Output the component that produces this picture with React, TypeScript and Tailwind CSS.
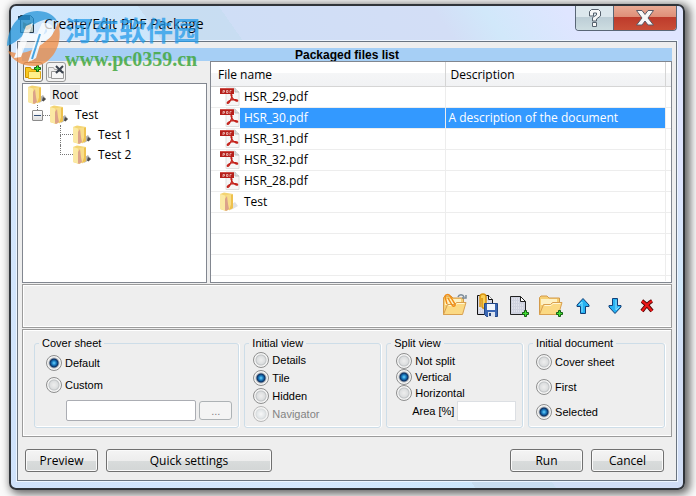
import React from "react";

const ui = "font-['Open_Sans','Noto_Sans',sans-serif]";

function PdfIcon() {
  return (
    <svg width="20" height="20" viewBox="0 0 20 20" aria-hidden="true" className="block shrink-0">
      <path d="M6 1h9l4 4v13.500H6z" fill="#f6f6f6" stroke="#dedede" />
      <path d="M15 1v4h4" fill="#ddd" stroke="#bbb" />
      <path d="M0 1h14v6H0z" fill="#b51f1a" />
      <path d="M0 1h14v1H0z" fill="#d0504a" />
      <path d="M3 6V3.500h1.500V5H3M6.500 3.500v2H8v-2zM10 6V3.500h1.500" fill="none" stroke="#f0c4c0" strokeWidth=".8" />
      <path d="M11 7.500c1.500 0 1 2.500 0 4.500-.8 2-2.200 4.500-3.300 4.300-1.500-.4 1-2.800 4-3.400 2.800-.6 6-.4 6 .8 0 1-3 .2-4.700-2C11.500 9.500 10.500 8.500 11 7.500z" fill="none" stroke="#c4221b" strokeWidth="1.300" />
    </svg>
  );
}

function FolderIcon({ badge = true }: { badge?: boolean }) {
  return (
    <svg width="20" height="20" viewBox="0 0 20 20" aria-hidden="true" className="block shrink-0">
      <path d="M11 18l7-4-3-4-3 2z" fill={badge ? "#b4b4b4" : "#e2e2e2"} />
      {badge && <path d="M15 12l3 2-2.500 2.500-1.500-1z" fill="#4a4a4a" />}
      <path d="M0 2L4 .5l9 1.500v14L6 19l-6-2z" fill="#f3d472" />
      <path d="M0 2l5 1.500v15L0 17z" fill="#fbe9a4" />
      <path d="M5 3.500L12 2v13l-4 3z" fill="#f8dd8a" />
      <path d="M5 18V7l2-3 1 8 1 5-3 2z" fill="#dca28a" />
      <path d="M11 2.500l2 .5v13l-4 2.500 2-6z" fill="#eec14e" />
    </svg>
  );
}

function Plus({ x, y }: { x: number; y: number }) {
  return (
    <g transform={`translate(${x} ${y})`}>
      <path d="M2.500.5h2v2h2v2h-2v2h-2v-2h-2v-2h2z" fill="#3fe02f" stroke="#145f14" />
    </g>
  );
}

function OpenFolderShape() {
  return (
    <>
      <path d="M1.500 21.500V4.500L3 3h6l2 2h10.500v4l-2 12z" fill="#f6cf73" stroke="#d39a4a" />
      <path d="M3 6h16v6H3z" fill="#fdf1c4" />
      <path d="M1.500 21.500l4-10h7l2-2h9.500l-3.500 12z" fill="#fbd983" stroke="#d9a050" />
      <path d="M6.500 12.500h6.500l2-2h7.500" fill="none" stroke="#fff6d4" />
    </>
  );
}

function OpenIcon() {
  return (
    <svg width="26" height="26" viewBox="0 0 26 26" aria-hidden="true">
      <OpenFolderShape />
      <path d="M5 11L3 4c0-3 4-3 5-1l5 8c1 2-2 3-3 1L6 5" fill="none" stroke="#f18d16" strokeWidth="1.500" />
      <path d="M16 4c1-3 5-3 6 0m2-2v3h-4" fill="none" stroke="#7b8b98" strokeWidth="1.500" />
    </svg>
  );
}

function SaveIcon() {
  return (
    <svg width="24" height="26" viewBox="0 0 24 26" aria-hidden="true">
      <path d="M2.500 2.500h11l4 4v15h-15z" fill="#d5d7e4" stroke="#111" />
      <path d="M4 6h12M4 9h12M4 12h12M4 15h12M4 18h12" stroke="#f6f6fa" strokeDasharray="1 1" />
      <path d="M13.500 2.500v4h4" fill="#fff" stroke="#111" />
      <path d="M5 14V4c0-4 6-4 6 0v9c0 3-4 3-4 0V5" fill="#f9cf55" stroke="#d99411" strokeWidth="1.500" />
      <path d="M9.500 10.500h13v13h-11l-2-2z" fill="#3a67b4" stroke="#234684" />
      <path d="M12 11h8v6h-8z" fill="#f2f6fc" />
      <path d="M13 19h7v5h-7z" fill="#dde4ee" />
      <path d="M14 20h2v3h-2z" fill="#27467e" />
    </svg>
  );
}

function NewPageIcon() {
  return (
    <svg width="24" height="26" viewBox="0 0 24 26" aria-hidden="true">
      <path d="M3.500 3.500h10l5 5v13h-15z" fill="#cfd2df" stroke="#222" />
      <path d="M13.500 3.500v5h5z" fill="#fff" stroke="#222" />
      <path d="M5 6h7M5 9h7M5 12h12M5 15h12M5 18h12" stroke="#f1f1f6" strokeDasharray="1 1" />
      <Plus x={15} y={17} />
    </svg>
  );
}

function NewFolderIcon() {
  return (
    <svg width="26" height="26" viewBox="0 0 26 26" aria-hidden="true">
      <OpenFolderShape />
      <Plus x={18} y={17} />
    </svg>
  );
}

function ArrowIcon({ down = false }: { down?: boolean }) {
  return (
    <svg width="16" height="18" viewBox="0 0 16 18" aria-hidden="true" className={down ? "rotate-180" : ""}>
      <path d="M8 1.500L14 8v1.500h-3.500v7h-5v-7H2V8z" fill="#27b2f2" stroke="#123f78" />
      <path d="M7 5v10M4 8l3-3" stroke="#8ee2ff" fill="none" />
    </svg>
  );
}

function DeleteIcon() {
  return (
    <svg width="14" height="14" viewBox="0 0 14 14" aria-hidden="true">
      <path d="M2 2c3 2 7 6 10 10M12 2C8 4 5 8 2 12" stroke="#4d0505" strokeWidth="4" fill="none" />
      <path d="M2 2c3 2 7 6 10 10M12 2C8 4 5 8 2 12" stroke="#ea1717" strokeWidth="2.200" fill="none" />
    </svg>
  );
}

function SmallFolder({ remove = false }: { remove?: boolean }) {
  return (
    <svg width="18" height="18" viewBox="0 0 18 18" aria-hidden="true">
      <path d="M1.500 14.500v-10h5l1 2h7v8z" fill={remove ? "#eee" : "#f8c81e"} stroke={remove ? "#aaa" : "#c78d00"} />
      <path d="M4.500 15.500v-7h12v7z" fill={remove ? "#f6f6f6" : "#fff08a"} stroke={remove ? "#999" : "#dfa712"} />
      {remove ? (
        <path d="M9 3l7 7M16 3l-7 7" stroke="#3a424e" strokeWidth="2" />
      ) : (
        <Plus x={10} y={2} />
      )}
    </svg>
  );
}

function Radio({ name, label, checked, disabled }: { name: string; label: string; checked?: boolean; disabled?: boolean }) {
  return (
    <label className={`flex h-4 items-center gap-[3px] whitespace-nowrap ${disabled ? "text-[#838383]" : "text-black"}`}>
      <input
        type="radio"
        name={name}
        defaultChecked={checked}
        disabled={disabled}
        className="size-4 shrink-0 appearance-none rounded-full border border-[#8e8f8f] bg-[radial-gradient(circle,#eee_0,#dcdedf_4px,#c0c3c5_5px,#f4f4f4_6px)] checked:bg-[radial-gradient(circle_at_50%_50%,#6fd3fb_0,#1d83c8_2px,#0b2f62_4px,#b4b8bb_5px,#f4f4f4_6px)] disabled:border-[#b8b8b8] disabled:bg-[radial-gradient(circle,#f8f8f8_0,#e2e6e8_4px,#d8dbdc_5px,#f4f4f4_6px)]"
      />
      <span>{label}</span>
    </label>
  );
}

function Group({ title, className, children }: { title: string; className: string; children: React.ReactNode }) {
  return (
    <fieldset className="min-w-0 rounded-[3px] border border-[#cddde8] px-1 shadow-[inset_0_-1px_0_#fff,1px_0_0_#fff]">
      <legend className="px-[3px] leading-[14px]">{title}</legend>
      <div className={`flex flex-col ${className}`}>{children}</div>
    </fieldset>
  );
}

function PushButton({ children, className }: { children: React.ReactNode; className: string }) {
  return (
    <button
      className={`h-[23px] rounded-[3px] border border-[#707070] bg-[linear-gradient(#f4f4f4,#ededed_50%,#d9dcdc_51%,#d3d6d6)] text-[12px] leading-5 shadow-[inset_0_0_0_1px_#fafafa] ${className}`}
    >
      {children}
    </button>
  );
}

const files = [
  { name: "HSR_29.pdf" },
  { name: "HSR_30.pdf", description: "A description of the document", selected: true },
  { name: "HSR_31.pdf" },
  { name: "HSR_32.pdf" },
  { name: "HSR_28.pdf" },
  { name: "Test", folder: true },
  {},
  {},
  {},
] as { name?: string; description?: string; selected?: boolean; folder?: boolean }[];

function FileTable() {
  return (
    <div className="min-w-0 flex-1 border border-[#828790] bg-white">
      <table className="w-full table-fixed border-collapse text-[12px]">
        <colgroup>
          <col className="w-[234px]" />
          <col />
          <col className="w-[6px]" />
        </colgroup>
        <thead>
          <tr className="h-6 bg-[linear-gradient(#fff_45%,#f5f6f7_46%,#f1f2f4)] text-left">
            <th className="border-r border-b border-[#d5d5d5] p-0 pt-[2px] pl-[7px] font-normal">File name</th>
            <th className="border-r border-b border-[#d5d5d5] p-0 pt-[2px] pl-[5px] font-normal">Description</th>
            <td className="border-b border-[#d5d5d5] p-0" />
          </tr>
        </thead>
        <tbody>
          {files.map((file, i) => (
            <tr key={i} className="h-[21px]">
              <td className="border-r border-b border-[#ededed] p-0">
                {file.name && (
                  <div className="flex h-5 items-center pl-[9px]">
                    {file.folder ? <FolderIcon badge={false} /> : <PdfIcon />}
                    <span className={`h-5 flex-1 pl-1 leading-5 ${file.selected ? "bg-[#3399ff] text-white" : ""}`}>{file.name}</span>
                  </div>
                )}
              </td>
              <td className={`border-r border-b border-[#ededed] p-0 pl-[3px] leading-5 ${file.selected ? "bg-[#3399ff] text-white" : ""}`}>
                {file.description}
              </td>
              <td className="border-b border-[#ededed] p-0" />
            </tr>
          ))}
          <tr className="h-[6px]">
            <td className="border-r border-[#ededed] p-0" />
            <td className="border-r border-[#ededed] p-0" />
            <td className="p-0" />
          </tr>
        </tbody>
      </table>
    </div>
  );
}

function TreeLeaf({ label, last }: { label: string; last?: boolean }) {
  return (
    <li className="flex h-5 items-center pl-[37px]">
      <span className="flex h-5 w-[13px] flex-col">
        <span className="h-[10px] border-b border-l border-dotted border-[#777]" />
        {!last && <span className="h-[10px] border-l border-dotted border-[#777]" />}
      </span>
      <FolderIcon />
      <span className="pl-[5px]">{label}</span>
    </li>
  );
}

function Tree() {
  return (
    <ul className="flex-1 border border-[#828790] bg-white pt-[1px] text-[12px] leading-5">
      <li>
        <div className="flex h-5 items-center pl-[5px]">
          <FolderIcon />
          <span className="ml-[2px] h-5 bg-[#eee] px-[2px]">Root</span>
        </div>
        <ul>
          <li>
            <div className="flex h-5 items-center pl-[9px]">
              <span className="flex h-5 w-[11px] flex-col items-center">
                <span className="h-[5px] border-l border-dotted border-[#777]" />
                <button aria-label="Collapse Test" className="flex size-[11px] shrink-0 items-center justify-center rounded-[1px] border border-[#8b8b8b] bg-linear-to-b from-white to-[#ddd]">
                  <span className="h-px w-[7px] bg-[#34517a]" />
                </button>
              </span>
              <span className="w-[7px] border-t border-dotted border-[#777]" />
              <FolderIcon />
              <span className="pl-[5px]">Test</span>
            </div>
            <ul>
              <TreeLeaf label="Test 1" />
              <TreeLeaf label="Test 2" last />
            </ul>
          </li>
        </ul>
      </li>
    </ul>
  );
}

function Watermark() {
  return (
    <div className="pointer-events-none absolute top-[10px] left-[7px] flex">
      <svg width="55" height="57" viewBox="0 0 55 57" aria-hidden="true" className="opacity-75">
        <path d="M0 36C1 15 14 1 30 1c10 0 17 4 20 10-9-3-17-1-24 4C18 21 14 31 0 36z" fill="#2495d9" />
        <path d="M51 12c7 25-9 44-24 44C14 56 5 50 1 41c8 3 17 3 26-2 12-6 21-15 24-27z" fill="#ee8a42" />
        <path d="M19 16l7-3-4 11h8l5-11h6l-14 36-6 3 7-21h-8l-6 16-7 1 9-24z" fill="#fff" />
        <path d="M35 13h4c10 1 10 13 0 17l-6 1 2-6c5-1 7-5 3-7l-9 30-5 3z" fill="#fff" />
        <path d="M33 24l-8 25" stroke="#2495d9" strokeWidth="2" />
      </svg>
      <div className="flex flex-col pl-[3px]">
        <span className="h-[36px] font-['Noto_Sans_CJK_SC',sans-serif] text-[27px] leading-[40px] font-bold text-[#239bea] opacity-75">河东软件园</span>
        <span className="font-['Liberation_Serif',serif] text-[20px] leading-[26px] font-bold text-[#43a83f] opacity-85">www.pc0359.cn</span>
      </div>
    </div>
  );
}

export default function App() {
  return (
    <main className={`relative flex min-h-screen flex-col overflow-hidden bg-[#fafafa] pt-1 pr-[11px] pb-[6px] pl-[9px] text-black ${ui}`}>
      <section className="flex flex-1 flex-col rounded-[7px] border-2 border-[#30343a] bg-[linear-gradient(55deg,#cfe2fb_0,#d5e8fd_30%,#cce6fb_46%,#c8ddf0_46%,#c8ddf2_54%,#cfdef6_54%,#d3def6_75%,#d1e8fa_80%,#dfe5ff_88%)] px-[6px] pb-[7px] shadow-[3px_2px_9px_2px_#666]">
        <header className="flex h-[35px] items-start">
          <svg width="18" height="20" viewBox="0 0 18 20" aria-hidden="true" className="mt-2 ml-[1px] shrink-0">
            <path d="M2.500 1.500h10l3 3v14h-13z" fill="#b4c4bf" stroke="#263b4c" />
            <path d="M0 2h12v4H0z" fill="#193c5b" />
            <path d="M5 8l4 2 4-2v6l-4 2-4-2z" fill="#8a7a43" />
          </svg>
          <h1 className="mt-[9px] ml-[8px] flex-1 text-[14px] leading-[18px] whitespace-nowrap">Create/Edit PDF Package</h1>
          <div className="flex h-[25px] overflow-hidden rounded-b-[4px] border border-t-0 border-[#596676]">
            <button aria-label="Help" className="flex w-[38px] items-center justify-center border-r border-[#596676] bg-[linear-gradient(#dce7ed_45%,#bccdd6_46%,#cddde1)]">
              <svg width="16" height="20" viewBox="0 0 16 20" aria-hidden="true">
                <path d="M2.500 8V3.500l2-2h7l2 2V8l-4 3v2h-4V9.500L9.500 7V5h-3v3zM5.500 14.500h4v4h-4z" fill="#f7f7f7" stroke="#56616d" />
              </svg>
            </button>
            <button aria-label="Close" className="flex w-[62px] items-center justify-center bg-[linear-gradient(#e9aa94,#df8f78_45%,#bd3a2b_46%,#c94e36)]">
              <svg width="20" height="18" viewBox="0 0 20 18" aria-hidden="true">
                <path d="M1.500 1.500h5.500l3 4 3-4h5.500L13 9l5.500 7H13l-3-4-3 4H1.500L7 9z" fill="#f7f7f7" stroke="#5a5a66" />
              </svg>
            </button>
          </div>
        </header>

        <div className="flex flex-1 flex-col border border-[#6a7480] bg-[#eee] px-1 pt-[6px] shadow-[0_0_0_1px_#edf5ff]">
          <h2 className="h-[13px] bg-[#a6cff5] text-center font-['Liberation_Sans',sans-serif] text-[12px] leading-[14px] font-bold">Packaged files list</h2>
          <div className="flex flex-1 gap-[3px]">
            <div className="flex w-[185px] flex-col">
              <div className="flex h-[22px] items-center gap-[3px] pl-[1px]">
                <button aria-label="Add folder" className="flex size-5 items-center justify-center rounded-[3px] border border-[#777] bg-[#f3f3f3]"><SmallFolder /></button>
                <button aria-label="Remove folder" className="flex size-5 items-center justify-center rounded-[3px] border border-[#999] bg-[#f3f3f3]"><SmallFolder remove /></button>
              </div>
              <Tree />
            </div>
            <FileTable />
          </div>

          <div className="mt-[1px] flex h-[44px] items-center justify-end border border-[#9b9b9b] pr-2 shadow-[inset_1px_1px_0_#fff,inset_0_-1px_0_#fff]">
            <button aria-label="Open package" className="flex w-8 justify-center"><OpenIcon /></button>
            <button aria-label="Save attachment" className="flex w-8 justify-center"><SaveIcon /></button>
            <button aria-label="Add file" className="flex w-8 justify-center"><NewPageIcon /></button>
            <button aria-label="Add folder to package" className="flex w-8 justify-center"><NewFolderIcon /></button>
            <button aria-label="Move up" className="flex w-8 justify-center"><ArrowIcon /></button>
            <button aria-label="Move down" className="flex w-8 justify-center"><ArrowIcon down /></button>
            <button aria-label="Delete" className="flex w-8 justify-center"><DeleteIcon /></button>
          </div>

          <div className="mt-[1px] grid h-[108px] grid-cols-[3fr_2fr_2fr_2fr] gap-[5px] border border-[#9b9b9b] pt-[6px] pr-[6px] pb-2 pl-[11px] font-['Liberation_Sans',sans-serif] text-[11px] leading-4 shadow-[inset_1px_1px_0_#fff,inset_0_-1px_0_#fff]">
            <Group title="Cover sheet" className="gap-[6px] pt-[5px] pl-[7px]">
              <Radio name="cover" label="Default" checked />
              <Radio name="cover" label="Custom" />
              <div className="flex items-center gap-[3px] pt-[1px] pr-[2px] pl-5">
                <input aria-label="Custom cover sheet" className="h-[21px] min-w-0 flex-1 rounded-[2px] border border-[#abadb3] bg-white px-1" />
                <button aria-label="Browse" className="h-[19px] w-[33px] rounded-[3px] border border-[#adb2b5] bg-[#f4f4f4] leading-3 text-[#838383]">...</button>
              </div>
            </Group>
            <Group title="Initial view" className="gap-[2px] pt-[2px] pl-[4px]">
              <Radio name="view" label="Details" />
              <Radio name="view" label="Tile" checked />
              <Radio name="view" label="Hidden" />
              <Radio name="view" label="Navigator" disabled />
            </Group>
            <Group title="Split view" className="pt-[3px] pl-[5px]">
              <Radio name="split" label="Not split" />
              <Radio name="split" label="Vertical" checked />
              <Radio name="split" label="Horizontal" />
              <label className="flex items-center gap-[3px] pr-[2px] pl-4 whitespace-nowrap">
                Area [%]
                <input className="h-5 min-w-0 flex-1 border border-[#dcdfe3] bg-white px-1" />
              </label>
            </Group>
            <Group title="Initial document" className="gap-[9px] pt-1 pl-[3px]">
              <Radio name="document" label="Cover sheet" />
              <Radio name="document" label="First" />
              <Radio name="document" label="Selected" checked />
            </Group>
          </div>

          <footer className="flex gap-2 pt-[12px] pr-2 pb-2 pl-[3px]">
            <PushButton className="w-[73px]">Preview</PushButton>
            <PushButton className="w-[166px]">Quick settings</PushButton>
            <PushButton className="ml-auto w-[73px]">Run</PushButton>
            <PushButton className="w-[73px]">Cancel</PushButton>
          </footer>
        </div>
      </section>
      <Watermark />
    </main>
  );
}
